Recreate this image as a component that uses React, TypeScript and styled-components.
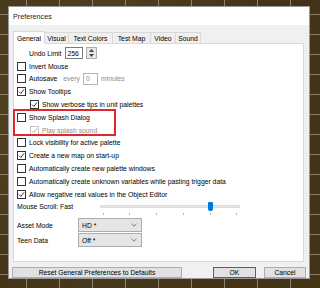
import React from 'react';
import styled, { createGlobalStyle } from 'styled-components';

const GlobalStyle = createGlobalStyle`
  html, body {
    margin: 0;
    padding: 0;
  }
  body {
    width: 320px;
    height: 288px;
    overflow: hidden;
    font-family: "Liberation Sans", Arial, sans-serif;
  }
`;

const Desktop = styled.div`
  width: 320px;
  height: 288px;
  box-sizing: border-box;
  padding: 6px 10px 0 8px;
  background-color: #4a3a1c;
  background-image:
    repeating-linear-gradient(90deg, transparent 0 26px, rgba(200, 196, 180, 0.55) 26px 27px, transparent 27px 33px),
    repeating-linear-gradient(180deg, transparent 0 14px, rgba(200, 196, 180, 0.5) 14px 15px, transparent 15px 20px),
    radial-gradient(circle at 30% 40%, #5a4725 0, #433418 70%);
`;

const Window = styled.div`
  width: 302px;
  height: 273px;
  box-sizing: border-box;
  background: #f0f0f0;
  border: 1px solid #9a9a9a;
  display: flex;
  flex-direction: column;
  font-size: 6.8px;
  color: #000;
`;

const TitleBar = styled.div`
  height: 18px;
  background: #fff;
  display: flex;
  align-items: center;
  padding-left: 4px;
  font-size: 7.2px;
  color: #1a1a1a;
`;

const Body = styled.div`
  padding: 5px 5px 0 4px;
  display: flex;
  flex-direction: column;
`;

const TabStrip = styled.div`
  display: flex;
  align-items: flex-end;
  height: 13px;
  padding-left: 0;
`;

const Tab = styled.div<{ $w: number; $active?: boolean }>`
  width: ${({ $w }) => $w}px;
  height: ${({ $active }) => ($active ? 13 : 11)}px;
  box-sizing: border-box;
  margin-right: -1px;
  border: 1px solid #d9d9d9;
  border-bottom: none;
  background: ${({ $active }) => ($active ? '#fff' : '#f0f0f0')};
  display: flex;
  align-items: center;
  justify-content: center;
  position: relative;
  z-index: ${({ $active }) => ($active ? 1 : 0)};
  margin-bottom: ${({ $active }) => ($active ? -1 : 0)}px;
`;

const Panel = styled.div`
  height: 219px;
  box-sizing: border-box;
  background: #fff;
  border: 1px solid #d9d9d9;
  padding-top: 3px;
  display: flex;
  flex-direction: column;
`;

const Row = styled.div<{ $indent?: boolean }>`
  height: 12.8px;
  display: flex;
  align-items: center;
  gap: 3px;
  padding-left: ${({ $indent }) => ($indent ? 16 : 3)}px;
  white-space: nowrap;
`;

const UndoRow = styled.div`
  height: 12.8px;
  display: flex;
  align-items: center;
  padding-left: 15px;
  gap: 3px;
`;

const Label = styled.span<{ $muted?: boolean; $w?: number }>`
  color: ${({ $muted }) => ($muted ? '#8d8d8d' : '#000')};
  ${({ $w }) => ($w ? `width: ${$w}px; flex: none;` : '')}
`;

const NumBox = styled.div<{ $w: number; $light?: boolean }>`
  width: ${({ $w }) => $w}px;
  height: 12px;
  box-sizing: border-box;
  border: 1px solid ${({ $light }) => ($light ? '#b5b5b5' : '#7a7a7a')};
  background: #fff;
  display: flex;
  align-items: center;
  padding-left: 2px;
  color: ${({ $light }) => ($light ? '#8d8d8d' : '#000')};
`;

const Spinner = styled.div`
  width: 11px;
  height: 12px;
  box-sizing: border-box;
  border: 1px solid #adadad;
  background: #e8e8e8;
  display: flex;
  flex-direction: column;
  align-items: center;
  justify-content: space-around;
`;

const Box = styled.span<{ $disabled?: boolean }>`
  width: 9px;
  height: 9px;
  box-sizing: border-box;
  flex: none;
  border: 1px solid ${({ $disabled }) => ($disabled ? '#c4c4c4' : '#333')};
  background: #fff;
  display: flex;
  align-items: center;
  justify-content: center;
`;

const Highlight = styled.div`
  position: relative;
  &::after {
    content: '';
    position: absolute;
    left: -1px;
    top: -2px;
    bottom: 1px;
    width: 103px;
    box-sizing: border-box;
    border: 2px solid #e2262f;
    pointer-events: none;
  }
`;

const SliderRow = styled.div`
  height: 12.8px;
  display: flex;
  align-items: center;
  padding-left: 3px;
`;

const Slider = styled.div`
  width: 140px;
  height: 12.8px;
  position: relative;
`;

const Track = styled.div`
  position: absolute;
  left: 0;
  right: 0;
  top: 4px;
  height: 3px;
  background: #e7e7e7;
  border: 1px solid #dcdcdc;
  box-sizing: border-box;
`;

const Thumb = styled.div`
  position: absolute;
  top: 1px;
  width: 5px;
  height: 9px;
  margin-left: -2.5px;
  background: #0078d7;
  border-radius: 1px 1px 2px 2px;
`;

const Ticks = styled.div`
  position: absolute;
  left: 2.5px;
  right: 2.5px;
  top: 12px;
  display: flex;
  justify-content: space-between;
`;

const Tick = styled.span`
  width: 1px;
  height: 2px;
  background: #b5b5b5;
`;

const SelectRow = styled.div<{ $gap: number }>`
  height: 13.5px;
  margin-top: ${({ $gap }) => $gap}px;
  display: flex;
  align-items: center;
  padding-left: 3px;
`;

const Select = styled.div`
  width: 64px;
  height: 13.5px;
  box-sizing: border-box;
  border: 1px solid #adadad;
  background: #e5e5e5;
  display: flex;
  align-items: center;
  justify-content: space-between;
  padding: 0 4px 0 3px;
`;

const Footer = styled.div`
  display: flex;
  align-items: center;
  margin: 5px -2px 0 -1px;
`;

const Button = styled.div<{ $w: number; $primary?: boolean }>`
  width: ${({ $w }) => $w}px;
  height: 11px;
  box-sizing: border-box;
  border: 1px solid ${({ $primary }) => ($primary ? '#0078d7' : '#adadad')};
  background: #e1e1e1;
  display: flex;
  align-items: center;
  justify-content: center;
  white-space: nowrap;
`;

const Spacer = styled.div<{ $w: number }>`
  width: ${({ $w }) => $w}px;
  flex: none;
`;

const Check = ({ checked, disabled }: { checked?: boolean; disabled?: boolean }) => (
  <Box $disabled={disabled}>
    {checked && (
      <svg width="7" height="7" viewBox="0 0 7 7">
        <polyline
          points="1,3.6 2.8,5.4 6,1.4"
          fill="none"
          stroke={disabled ? '#b0b0b0' : '#333'}
          strokeWidth="1"
        />
      </svg>
    )}
  </Box>
);

const Chevron = () => (
  <svg width="6" height="4" viewBox="0 0 6 4">
    <polyline points="0.5,0.8 3,3.2 5.5,0.8" fill="none" stroke="#606060" strokeWidth="0.8" />
  </svg>
);

const tabs = [
  { name: 'General', w: 32, active: true },
  { name: 'Visual', w: 25 },
  { name: 'Text Colors', w: 45 },
  { name: 'Test Map', w: 39 },
  { name: 'Video', w: 26 },
  { name: 'Sound', w: 26 },
];

const thumbPos = 0.8;

export default function App() {
  return (
    <>
      <GlobalStyle />
      <Desktop>
        <Window>
          <TitleBar>Preferences</TitleBar>
          <Body>
            <TabStrip>
              {tabs.map((t) => (
                <Tab key={t.name} $w={t.w} $active={t.active}>
                  {t.name}
                </Tab>
              ))}
            </TabStrip>
            <Panel>
              <UndoRow>
                <Label>Undo Limit</Label>
                <NumBox $w={18}>256</NumBox>
                <Spinner>
                  <svg width="5" height="3" viewBox="0 0 5 3">
                    <polygon points="0,3 2.5,0 5,3" fill="#444" />
                  </svg>
                  <svg width="5" height="3" viewBox="0 0 5 3">
                    <polygon points="0,0 2.5,3 5,0" fill="#444" />
                  </svg>
                </Spinner>
              </UndoRow>
              <Row>
                <Check />
                <Label>Invert Mouse</Label>
              </Row>
              <Row>
                <Check />
                <Label>Autosave</Label>
                <Label $muted style={{ marginLeft: 3 }}>every</Label>
                <NumBox $w={15} $light>0</NumBox>
                <Label $muted>minutes</Label>
              </Row>
              <Row>
                <Check checked />
                <Label>Show Tooltips</Label>
              </Row>
              <Row $indent>
                <Check checked />
                <Label>Show verbose tips in unit palettes</Label>
              </Row>
              <Highlight>
                <Row>
                  <Check />
                  <Label>Show Splash Dialog</Label>
                </Row>
                <Row $indent>
                  <Check checked disabled />
                  <Label $muted>Play splash sound</Label>
                </Row>
              </Highlight>
              <Row>
                <Check />
                <Label>Lock visibility for active palette</Label>
              </Row>
              <Row>
                <Check checked />
                <Label>Create a new map on start-up</Label>
              </Row>
              <Row>
                <Check />
                <Label>Automatically create new palette windows</Label>
              </Row>
              <Row>
                <Check />
                <Label>Automatically create unknown variables while pasting trigger data</Label>
              </Row>
              <Row>
                <Check checked />
                <Label>Allow negative real values in the Object Editor</Label>
              </Row>
              <SliderRow>
                <Label $w={43}>Mouse Scroll:</Label>
                <Label $w={40}>Fast</Label>
                <Slider>
                  <Track />
                  <Thumb style={{ left: `calc(2.5px + ${thumbPos * 135}px)` }} />
                  <Ticks>
                    {[0, 1, 2, 3, 4, 5].map((i) => (
                      <Tick key={i} />
                    ))}
                  </Ticks>
                </Slider>
              </SliderRow>
              <SelectRow $gap={5}>
                <Label $w={61}>Asset Mode</Label>
                <Select>
                  <span>HD *</span>
                  <Chevron />
                </Select>
              </SelectRow>
              <SelectRow $gap={1.5}>
                <Label $w={61}>Teen Data</Label>
                <Select>
                  <span>Off *</span>
                  <Chevron />
                </Select>
              </SelectRow>
            </Panel>
            <Footer>
              <Button $w={170}>Reset General Preferences to Defaults</Button>
              <Spacer $w={31} />
              <Button $w={43} $primary>
                OK
              </Button>
              <Spacer $w={8} />
              <Button $w={42}>Cancel</Button>
            </Footer>
          </Body>
        </Window>
      </Desktop>
    </>
  );
}
